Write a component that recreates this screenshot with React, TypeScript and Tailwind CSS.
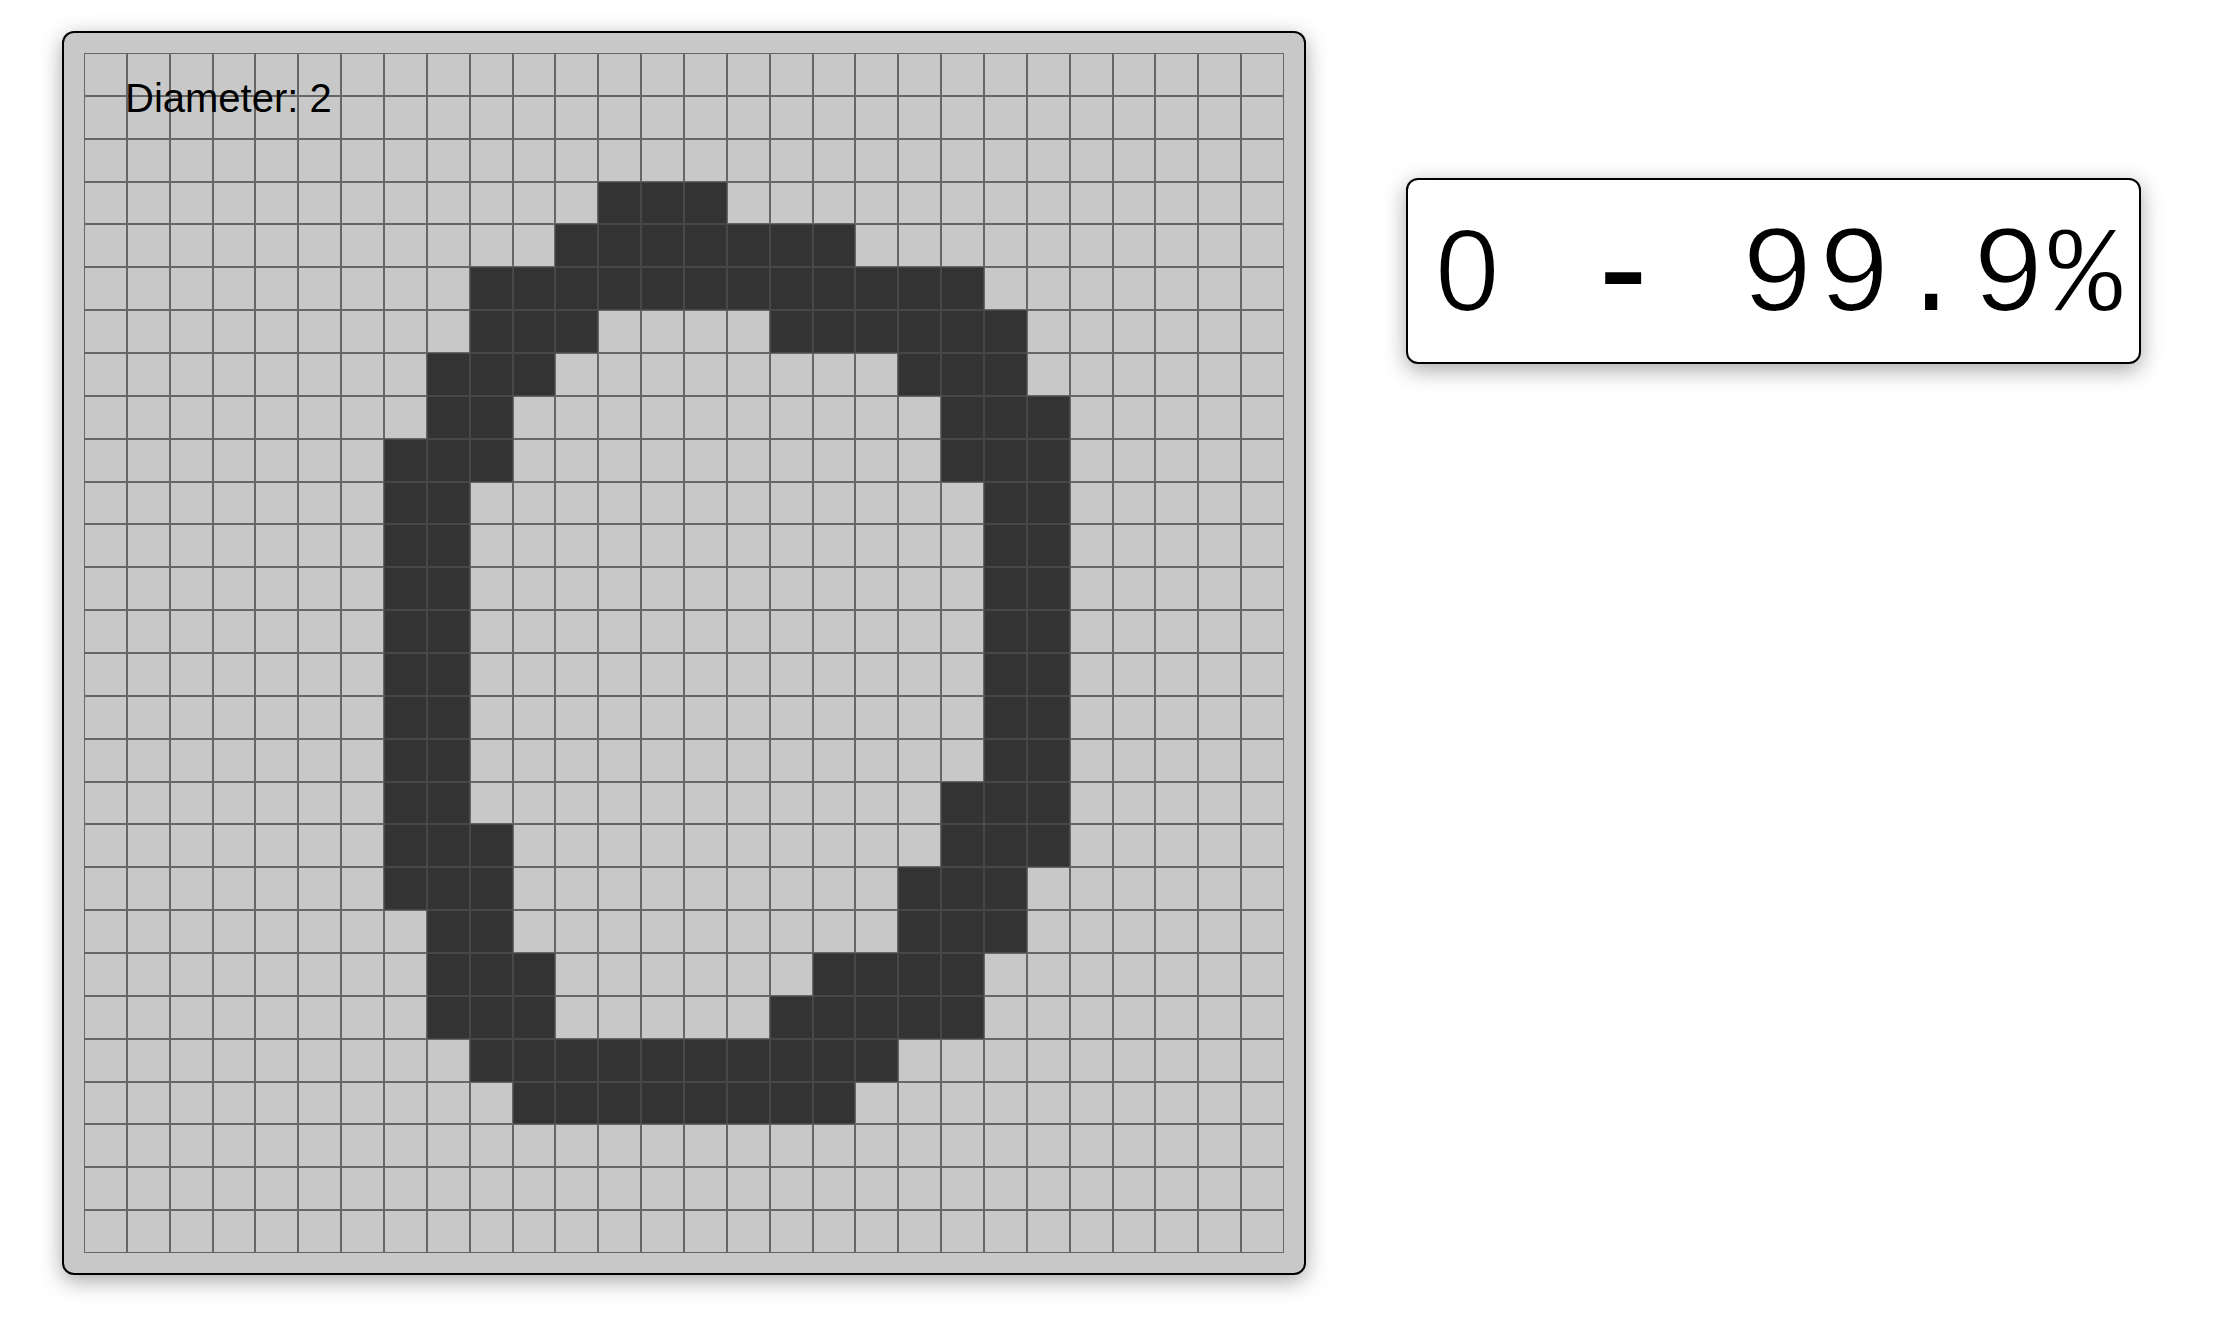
import React from 'react';

const SIZE = 28;

// filled runs per row: [from, to] inclusive
const filled: Record<number, [number, number][]> = {
  3: [[12, 14]],
  4: [[11, 17]],
  5: [[9, 20]],
  6: [[9, 11], [16, 21]],
  7: [[8, 10], [19, 21]],
  8: [[8, 9], [20, 22]],
  9: [[7, 9], [20, 22]],
  10: [[7, 8], [21, 22]],
  11: [[7, 8], [21, 22]],
  12: [[7, 8], [21, 22]],
  13: [[7, 8], [21, 22]],
  14: [[7, 8], [21, 22]],
  15: [[7, 8], [21, 22]],
  16: [[7, 8], [21, 22]],
  17: [[7, 8], [20, 22]],
  18: [[7, 9], [20, 22]],
  19: [[7, 9], [19, 21]],
  20: [[8, 9], [19, 21]],
  21: [[8, 10], [17, 20]],
  22: [[8, 10], [16, 20]],
  23: [[9, 18]],
  24: [[10, 17]],
};

const isOn = (r: number, c: number) =>
  (filled[r] || []).some(([a, b]) => c >= a && c <= b);

const App = () => {
  const cells = [];
  for (let r = 0; r < SIZE; r++) {
    for (let c = 0; c < SIZE; c++) {
      const on = isOn(r, c);
      cells.push(
        <div
          key={`${r}-${c}`}
          className={
            on
              ? 'bg-[#333333] border border-[#474747]'
              : 'bg-[#c8c8c8] border border-[#666666]'
          }
        />
      );
    }
  }

  return (
    <div className="min-h-screen bg-white flex items-start gap-[100px] pl-[62px] pt-[31px] font-['Liberation_Sans',Arial,sans-serif]">
      {/* drawing pad */}
      <div className="relative shrink-0 bg-[#c8c8c8] border-2 border-black rounded-xl p-[20px] shadow-[0_6px_22px_rgba(0,0,0,0.35)]">
        <div className="grid grid-cols-[repeat(28,minmax(0,1fr))] grid-rows-[repeat(28,minmax(0,1fr))] w-[1200px] h-[1200px]">
          {cells}
        </div>
        <div className="absolute left-[61px] top-[45px] text-[40px] leading-none text-black">
          Diameter: 2
        </div>
      </div>

      {/* prediction readout */}
      <div className="mt-[147px] shrink-0 w-[735px] h-[186px] bg-white border-2 border-black rounded-xl shadow-[0_6px_22px_rgba(0,0,0,0.35)] pl-[24px] pt-[33px]">
        <div className="font-['Liberation_Mono','Courier_New',monospace] text-[124px] leading-none tracking-[2.6px] text-black whitespace-pre [-webkit-text-stroke:2px_#ffffff]">
          <span className="inline-block w-[77px] pl-[3px] text-[116px] tracking-normal font-['Liberation_Sans',Arial,sans-serif]">0</span>
          {' '}
          <span className="[-webkit-text-stroke:2px_#000000]">-</span>
          {' 99.9%'}
        </div>
      </div>
    </div>
  );
};

export default App;
